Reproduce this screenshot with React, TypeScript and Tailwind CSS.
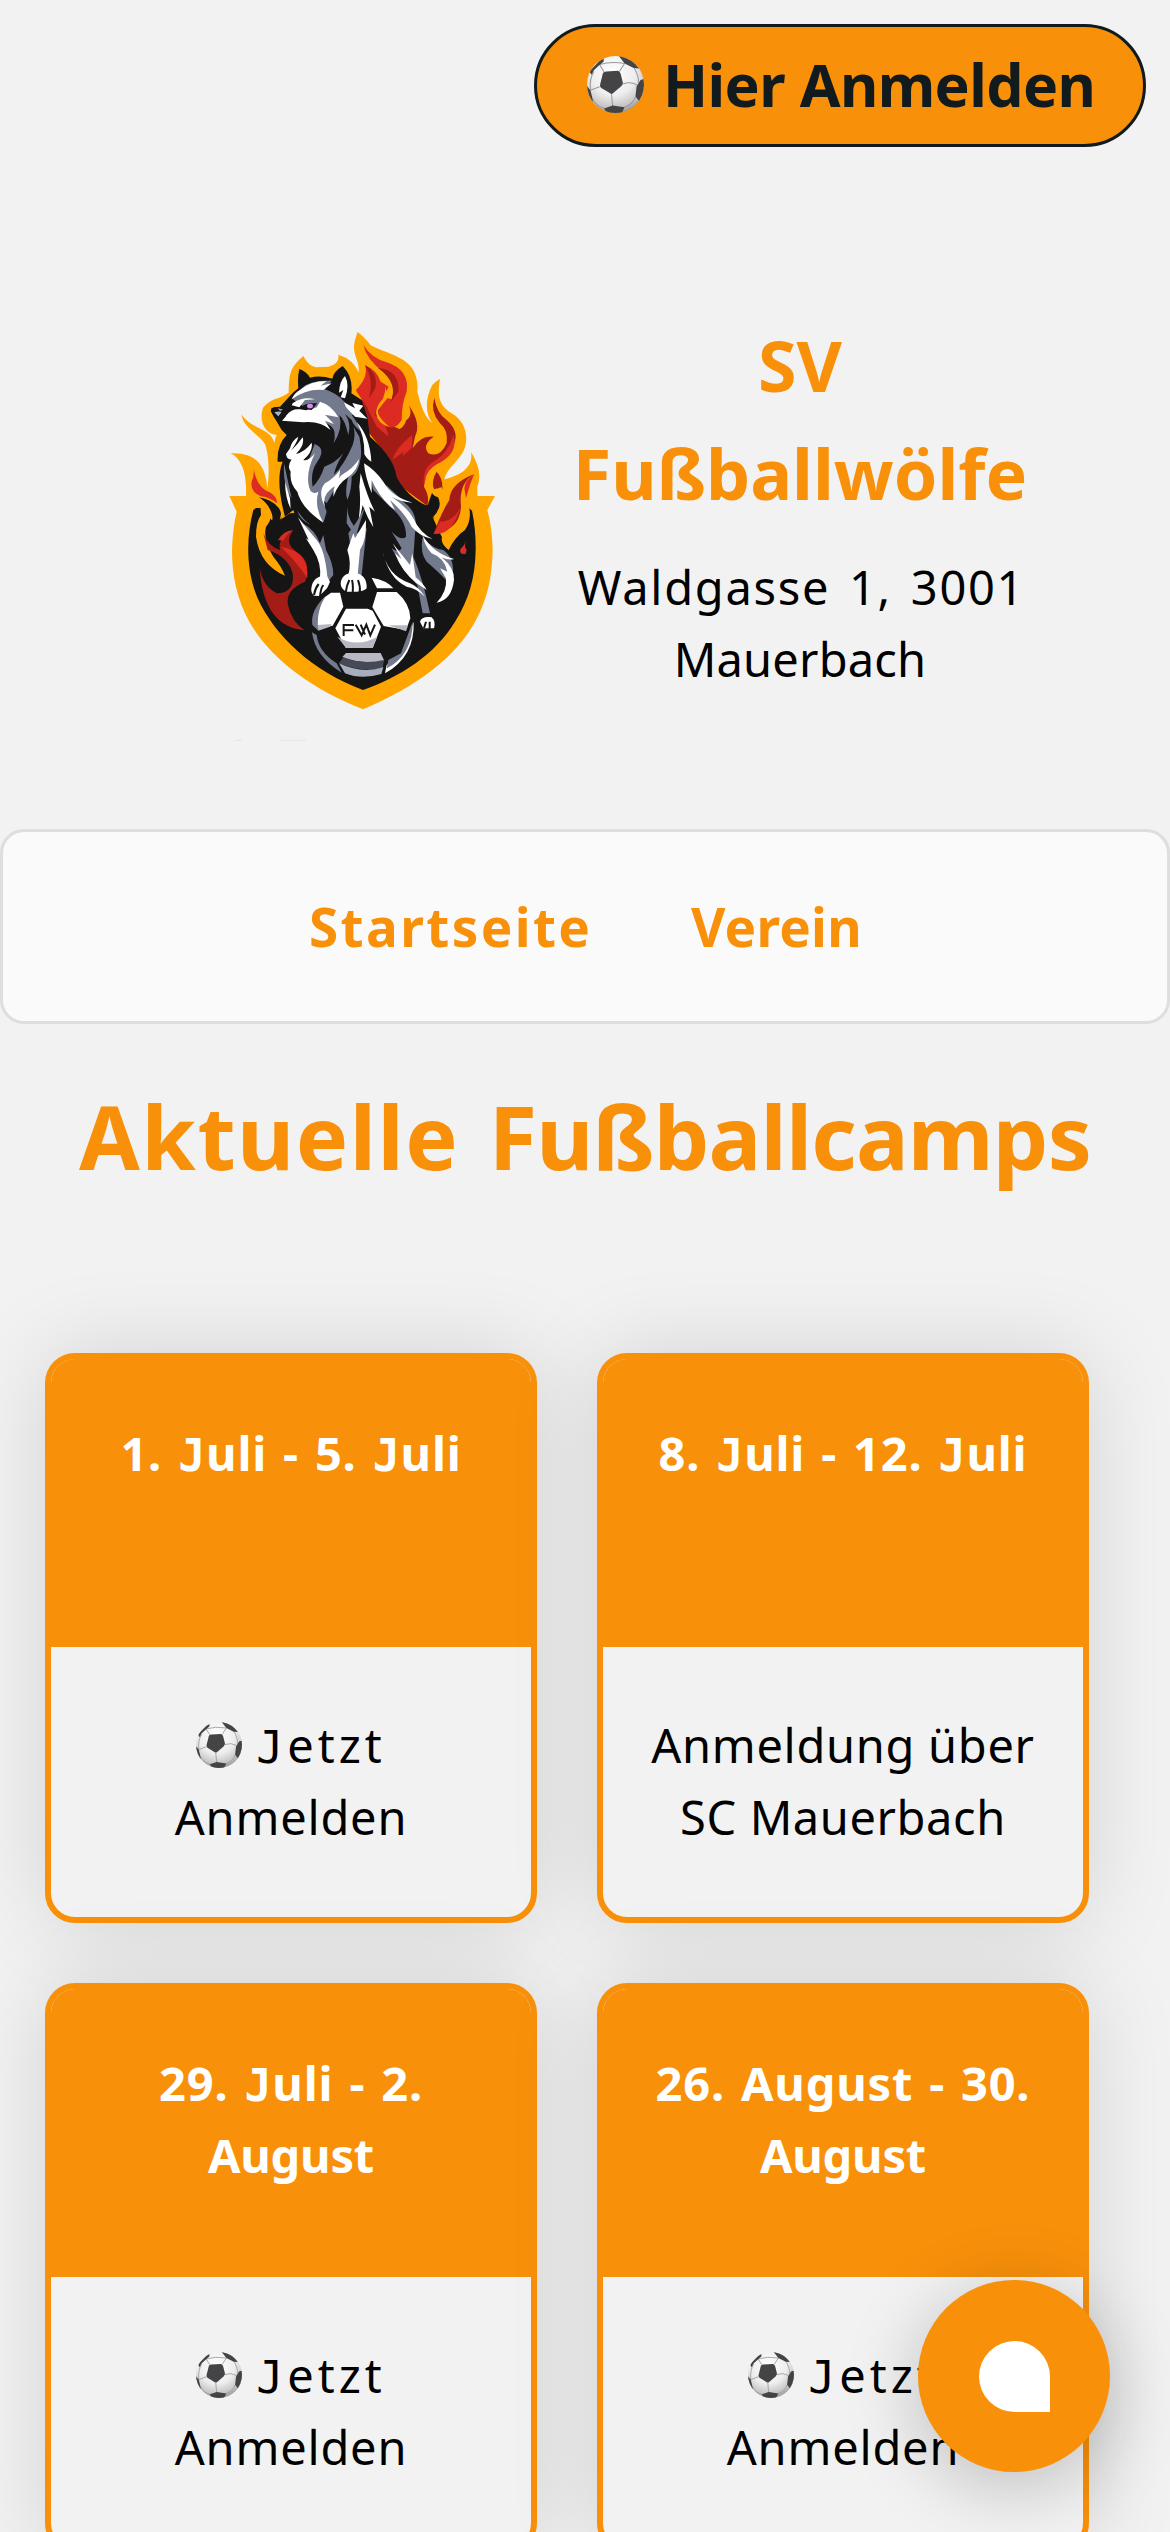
import React, { useId } from "react";

function Ball({ className }: { className: string }) {
  const id = useId();
  return (
    <svg viewBox="0 0 100 100" className={className}>
      <defs>
        <radialGradient id={id + "g"} cx="0.45" cy="0.3" r="0.72">
          <stop offset="0" stopColor="#ffffff" />
          <stop offset="0.55" stopColor="#ededed" />
          <stop offset="0.85" stopColor="#c4c4c4" />
          <stop offset="1" stopColor="#909090" />
        </radialGradient>
        <clipPath id={id + "c"}>
          <circle cx="50" cy="50" r="50" />
        </clipPath>
      </defs>
      <circle cx="50" cy="50" r="50" fill={`url(#${id}g)`} />
      <g clipPath={`url(#${id}c)`}>
        <g stroke="#999" strokeWidth="1.8" fill="none">
          <path d="M30 28 22 15M57 27 66 13M63 49Q76 44 88 51M43 67 45 88M22 54 6 60M22 15Q42 9 66 13M83 21Q92 38 90 47M6 60Q4 40 12 27M85 72Q80 85 66 90M10 76Q18 90 31 92" />
        </g>
        <g fill="#444446">
          <path d="M28 30Q30 27 34 27L54 26Q58 27 59 31L63 47Q63 51 60 53L46 65Q43 68 40 65L25 56Q22 54 23 50Z" />
          <path d="M4 27 30 0 29 10 22 16 12 25 8 33ZM55-1 66 13 82 21 92 22 75 3ZM102 40 94 42 87 53 85 71 92 80 104 70ZM30 92 45 87 66 90 60 102 36 102ZM-2 50 6 60 10 76 10 83-2 65Z" />
        </g>
      </g>
    </svg>
  );
}

function Logo() {
  return (
    <svg viewBox="0 0 900 1290" className="h-[430px] w-[300px] shrink-0">
      <path
        fill="#ffa500"
        d="M459 1168C300 1105 180 1015 118 905C80 835 66 765 66 690Q68 625 80 575L58 528H108Q112 425 62 400C115 400 165 410 172 505C180 450 175 400 165 372C145 340 100 325 94 283C125 330 185 325 193 370Q195 355 200 345C155 340 148 290 160 262C185 232 205 240 236 218C238 160 238 145 280 108Q295 138 318 142L355 140Q390 132 385 104Q430 118 446 157C450 110 415 105 443 36Q470 58 482 76C550 110 630 115 622 215C635 265 645 292 667 309C645 280 645 235 667 195Q677 184 690 177C682 225 685 255 725 280C765 302 778 350 762 390C745 425 710 445 703 478C745 468 792 445 783 396Q820 455 802 500V528H855L832 570Q847 625 848 690C846 775 832 835 798 900C740 1010 620 1100 459 1168Z"
      />
      {/* shield interior */}
      <path
        fill="#151515"
        d="M459 1110C310 1055 195 950 143 835C105 745 110 645 130 570L138 564H156L185 600 210 600 240 580 655 555 668 592 690 640 716 690Q735 650 765 630Q785 600 777 564L786 572Q798 630 797 690C796 770 777 840 735 905C675 1005 570 1070 459 1110Z"
      />
      <path fill="#151515" d="M147 532Q190 540 207 565Q222 590 207 650L170 700Q150 650 166 625Q195 610 185 580Q175 550 147 532Z" />
      {/* large flames */}
      <path fill="#a31c16" d="M455 238Q530 250 538 310Q570 340 582 305Q612 290 596 256Q635 310 615 350L608 385Q632 345 671 350Q635 375 655 400Q690 415 710 370Q715 330 690 310Q660 275 673 233Q680 280 710 300Q755 340 725 385C690 430 640 440 642 500Q660 530 652 558L560 490 540 420 455 310Z" />
      <path fill="#dc2b22" d="M730 345Q745 395 695 425 650 445 646 480L642 500Q635 445 670 425 715 400 730 345Z" />
      <path fill="#dc2b22" d="M438 210Q477 170 465 136Q500 150 512 185L536 200 520 230 545 238Q560 190 520 155Q470 120 460 75Q485 115 530 127Q600 150 590 215Q575 250 575 300Q560 325 540 322Q500 300 500 260L495 285 528 320 536 350 500 320 470 260 440 215Z" />
      <path fill="#a31c16" d="M465 136Q505 158 496 205L477 235Q492 180 465 136ZM503 143Q570 150 565 215L540 250Q570 190 503 143Z" />
      <path fill="#ffa500" d="M525 188Q525 210 536 230Q515 255 504 270Q500 290 540 322Q502 312 498 278Q500 255 518 238Q528 218 525 188ZM596 256Q580 260 580 290 575 315 563 328 592 325 596 256Z" />
      <path fill="#dc2b22" d="M606 345Q608 370 604 385L578 408 580 395 548 420Q555 385 606 345Z" />
      <path fill="#a31c16" d="M680 455Q698 475 697 501L670 508Q664 480 680 455Z" />
      <path fill="#151515" d="M540 425Q570 520 652 558Q662 530 670 508L698 502Q705 550 667 600Q670 650 600 610L520 540Z" />
      <path fill="#ffa500" d="M665 482Q655 525 684 532Q700 560 667 594Q715 580 703 525L697 502 672 508Z" />
      <path fill="#dc2b22" d="M130 435Q135 490 165 510Q202 525 202 550Q175 530 152 529Q120 515 125 484Q135 465 130 435Z" />
      {/* small flames over the shield */}
      <path fill="#ffa500" d="M150 540Q205 575 168 620Q158 660 190 710Q215 740 225 767Q150 735 138 650Q138 605 153 585Z" />
      <path fill="#ffa500" d="M207 520Q240 560 209 600Q222 555 200 525Z" />
      <path fill="#a31c16" d="M160 640Q175 680 210 690Q202 650 250 630Q220 670 260 695Q310 730 285 785Q225 810 234 855Q245 905 283 931Q160 920 149 745Q160 800 200 820Q255 820 248 760Q235 710 173 690Z" />
      <path fill="#dc2b22" d="M212 680Q300 695 292 775Q260 725 212 680ZM204 660Q222 632 248 631Q228 645 220 662Z" />
      <path fill="#a31c16" d="M793 462Q745 490 753 560Q750 630 671 641Q690 585 718 540Q720 490 793 462Z" />
      <path fill="#dc2b22" d="M793 462Q765 480 763 505L768 535Q780 490 793 462ZM753 560Q730 605 690 605L671 641Q725 650 753 560ZM770 658Q760 680 770 690L767 701Q748 705 751 688Q765 675 770 658Z" />
      <path fill="#ffa500" d="M778 565Q785 635 725 650Q710 660 716 691Q685 665 700 642Q735 640 755 570Z" />
      {/* wolf silhouette */}
      <path
        fill="#151515"
        d="M268 147Q290 155 300 173Q330 165 367 176Q370 155 398 138Q430 170 424 220L455 240 472 292 480 350Q560 420 560 480L610 548 665 620 670 660Q740 690 735 755Q730 840 670 852L672 920 620 925 460 800 300 830 285 680 250 570 225 590Q195 480 218 425L203 425Q200 375 230 345L215 330 183 275Q180 260 210 260L250 217 265 205Q262 170 268 147Z"
      />
      {/* head */}
      <path fill="#747a8e" d="M245 235 275 205Q300 180 365 182L345 208Q375 218 398 240L440 285 425 284 462 340Q430 320 425 300L405 282Q425 310 415 345 405 300 388 285 400 325 371 370 380 335 365 320 358 340Q345 318 300 325L240 333 213 320 222 300 290 305 350 310 360 290 320 250 280 240Z" />
      <path fill="#fff" d="M270 210Q300 183 350 183L332 197 365 190 340 210Q290 205 245 238 252 220 270 210ZM405 168Q420 195 405 235L392 232 400 210 387 218Q388 185 405 168ZM402 247 435 265 427 249 460 257 448 272 472 296 435 290 408 262Z" />
      <path fill="#fff" d="M248 250Q280 228 315 238L285 240 268 262 245 256ZM230 285Q245 265 270 268 295 275 320 262L330 245Q365 255 385 292L345 284 372 312 345 302 362 330Q330 302 280 307L215 302Z" />
      <path fill="#151515" d="M184 265Q200 257 222 268L228 288 210 310Q185 292 184 265ZM212 318Q235 324 265 318 310 305 345 322 300 320 255 333 225 334 212 318ZM268 264Q285 247 322 250L305 270Z" />
      <path fill="#aeb2c2" d="M193 277Q205 273 215 276L205 289ZM203 265 220 269 210 272Z" />
      <ellipse cx="300" cy="258" rx="9" ry="7" fill="#d48cf2" />
      {/* chest and mane */}
      <path fill="#747a8e" d="M314 372Q350 385 322 425 300 455 308 500 330 480 343 440 375 430 400 400 375 440 372 465 405 430 428 375 438 345 430 320L448 350Q462 420 440 440 410 455 390 480L350 550Q332 530 350 575L341 606Q310 590 290 540L285 450ZM222 430Q218 500 245 535L235 490ZM262 572Q285 605 300 612Q270 600 262 572ZM428 432 450 425Q445 455 425 470 425 510 412 540Q400 500 428 432Z" />
      <path fill="#fff" d="M265 350Q245 362 240 385L228 402Q230 420 245 418Q230 440 242 455Q238 490 262 515Q275 565 340 608Q312 560 325 515Q300 530 295 490Q290 450 315 400Q295 425 280 420Q310 395 305 368Q285 395 258 402Q285 375 278 352Q262 375 243 392Q262 365 265 350Z" />
      <path fill="#fff" d="M390 450Q390 490 362 508Q335 530 345 562Q322 515 345 490Q372 475 390 450ZM447 417Q445 450 410 475Q385 490 370 530Q368 490 395 465Q430 445 447 417ZM440 306Q480 350 484 425Q468 415 463 402Q465 350 440 306ZM225 485Q226 535 242 566L240 535Z" />
      {/* back and hind leg */}
      <path fill="#747a8e" d="M475 455Q540 500 580 545Q628 580 615 640L610 710Q640 780 660 880H638L622 795 575 740 545 685Q565 700 575 685L545 635Q575 665 588 650Q590 600 540 560L490 510Z" />
      <path fill="#fff" d="M462 430Q495 450 520 485Q545 530 608 548Q570 545 545 530Q590 560 610 595Q630 640 668 657Q630 650 605 620Q585 580 540 540L555 570Q520 545 495 500L485 480V520Q465 470 462 430ZM452 460Q475 540 495 575L478 560 490 622Q470 590 458 555L440 640Q455 560 448 500ZM517 690Q530 765 600 790 625 800 645 830 620 805 590 800 535 775 517 690ZM548 670 600 735 607 700 617 772Q640 790 650 810L618 788Q575 755 555 700L575 718Z" />
      {/* tail */}
      <path fill="#747a8e" d="M637 655Q675 690 700 690Q740 720 725 780 715 835 682 847Q710 830 708 780 680 750 650 725 630 700 637 655Z" />
      <path fill="#fff" d="M637 645Q670 700 732 717Q715 722 695 712 735 745 732 780 725 840 680 848 712 815 708 775L690 745 712 755Q705 715 665 700 645 680 637 645Z" />
      {/* front legs */}
      <path fill="#747a8e" d="M278 610Q315 630 330 670L340 645 348 690Q370 730 370 765L350 790 335 740Q330 700 310 680ZM412 550Q410 590 430 615V640L410 610ZM415 640 440 605 465 560 440 640 470 625 455 765H440L425 700Z" />
      <path fill="#fff" d="M264 592Q290 625 320 660 345 690 352 770L330 775Q335 730 310 690L288 655 296 660ZM468 600Q470 660 450 690L443 765H415Q425 730 412 690L430 640 435 655Z" />
      {/* ball */}
      <circle cx="459" cy="925" r="148" fill="#151515" />
      <path fill="#fff" d="M363 818H390L400 860 368 917 322 925Q310 875 340 835ZM501 816H560Q600 850 601 895L588 930 521 918 487 861ZM408 866H473L488 872 513 920 488 984H408L376 925ZM485 773Q530 780 550 805H501ZM611 905Q615 1010 525 1060L530 1035 575 1005Z" />
      <path fill="#b8b8c4" d="M322 915 365 912 360 920 325 932ZM535 916H594L588 934ZM382 950Q440 985 502 950L488 984H408ZM408 999H512L523 1022Q455 1035 397 1011Z" />
      <path fill="#747a8e" d="M350 825Q300 870 307 915L325 932Q317 870 350 825ZM306 937Q315 1010 395 1058L380 1030Q325 995 320 945ZM608 905Q608 1005 530 1045L535 1020 573 1000Z" />
      <path fill="#464a57" d="M400 1012Q455 1035 522 1020L518 1045Q455 1058 387 1030Z" />
      <path fill="#a9acbd" d="M387 1030Q455 1062 520 1042L514 1062Q455 1080 405 1060Z" />
      <path stroke="#151515" strokeWidth="6" d="M401 948V915H432M401 931H430M437 914 455 946 469 914 481 946 495 914M452 914 465 944" fill="none" />
      {/* paws */}
      <path fill="#fff" d="M304 805Q308 768 350 766L360 785Q352 805 348 808L328 828 312 827Q302 818 304 805ZM392 790Q395 757 435 758 472 765 470 805 460 815 440 815L410 815Q392 808 392 790ZM630 905Q635 888 665 892 678 905 672 925H640Z" />
      <path stroke="#151515" strokeWidth="6" fill="none" d="M312 825Q315 805 326 792M330 830Q332 805 340 795M407 818Q410 795 418 780M428 820Q430 795 426 780M449 820Q452 800 444 780M642 925 648 905M659 928V905" />
      <path stroke="#e5e5e5" strokeWidth="3" d="M75 1261H96M210 1261H287" />
    </svg>
  );
}

/* Capital J with a top bar that rests on the baseline. */
function J() {
  return <span className="font-['DejaVu_Sans_Mono',monospace] text-[45px] leading-none">J</span>;
}

type Camp = {
  title: React.ReactNode;
  body: React.ReactNode;
};

const signUp = (
  <>
    <p className="flex h-[72px] items-center justify-center">
      <Ball className="mr-[14px] size-[46px]" />
      <span className="tracking-[4px]">
        <J />
        etzt
      </span>
    </p>
    <p className="tracking-[0.8px]">Anmelden</p>
  </>
);

const camps: Camp[] = [
  {
    title: (
      <p>
        1. <J />
        uli - 5. <J />
        uli
      </p>
    ),
    body: signUp,
  },
  {
    title: (
      <p>
        8. <J />
        uli - 12. <J />
        uli
      </p>
    ),
    body: (
      <>
        <p className="tracking-[0.7px]">Anmeldung über</p>
        <p className="tracking-[0.6px]">SC Mauerbach</p>
      </>
    ),
  },
  {
    title: (
      <>
        <p>
          29. <J />
          uli - 2.
        </p>
        <p className="tracking-[-0.2px]">August</p>
      </>
    ),
    body: signUp,
  },
  {
    title: (
      <>
        <p>26. August - 30.</p>
        <p className="tracking-[-0.2px]">August</p>
      </>
    ),
    body: signUp,
  },
];

export default function App() {
  return (
    <div className="relative h-[2532px] w-[1170px] overflow-hidden bg-[#f2f2f2] font-['Noto_Sans',sans-serif] text-black">
      <div className="flex h-[320px] justify-end pt-6 pr-6">
        <button className="flex h-[123px] w-[612px] items-center rounded-full border-[3px] border-[#111a1d] bg-[#f8900a] pb-[3px] pl-[50px] text-[59px] font-bold text-[#111a1d]">
          <Ball className="mr-[19px] size-[57px] shrink-0" />
          <span className="tracking-[-0.6px] whitespace-nowrap">Hier Anmelden</span>
        </button>
      </div>

      <header className="flex h-[509px] pl-[210px]">
        <Logo />
        <div className="-mt-[9px] ml-[50px] w-[480px] text-center whitespace-nowrap">
          <h1 className="text-[70px] leading-[108px] font-bold text-[#f8900a]">
            SV
            <br />
            Fußballwölfe
          </h1>
          <p className="mt-6 text-[47px] leading-[72px]">
            <span className="ml-[3px] tracking-[1.7px] [word-spacing:5px]">Waldgasse 1, 3001</span>
            <br />
            <span className="tracking-[0.2px]">Mauerbach</span>
          </p>
        </div>
      </header>

      <nav className="flex h-[195px] items-center rounded-3xl border-[3px] border-[#dedede] bg-[#fafafa] pl-[306px] text-[53px] font-bold text-[#f8900a]">
        <span className="w-[382px] tracking-[2.4px]">Startseite</span>
        <span className="tracking-[0.2px]">Verein</span>
      </nav>

      <h2 className="mt-[46px] text-center text-[88px] leading-[132px] font-bold whitespace-nowrap text-[#f8900a]">
        <span className="tracking-[1.5px] [word-spacing:5px]">Aktuelle </span>
        <span className="tracking-[-0.8px]">Fußballcamps</span>
      </h2>

      <main className="mt-[151px] ml-[45px] grid w-[1044px] grid-cols-2 gap-[60px] text-[47px] leading-[72px] whitespace-nowrap">
        {camps.map((camp, i) => (
          <section
            key={i}
            className="h-[570px] rounded-[30px] border-[6px] border-[#f8900a] bg-[#f2f2f2] text-center shadow-[0_0_90px_rgba(0,0,0,0.13)]"
          >
            <div className="h-[288px] rounded-t-3xl bg-[#f8900a] pt-[58px] font-bold tracking-[0.8px] text-white [word-spacing:3px]">
              {camp.title}
            </div>
            <div className="pt-[62px]">{camp.body}</div>
          </section>
        ))}
      </main>

      <button
        aria-label="Chat"
        className="absolute top-[2280px] left-[918px] flex size-[192px] items-center justify-center rounded-full bg-[#f8900a] shadow-[0_15px_75px_rgba(0,0,0,0.22)]"
      >
        <span className="size-[71px] rounded-full rounded-br-none bg-white" />
      </button>
    </div>
  );
}
